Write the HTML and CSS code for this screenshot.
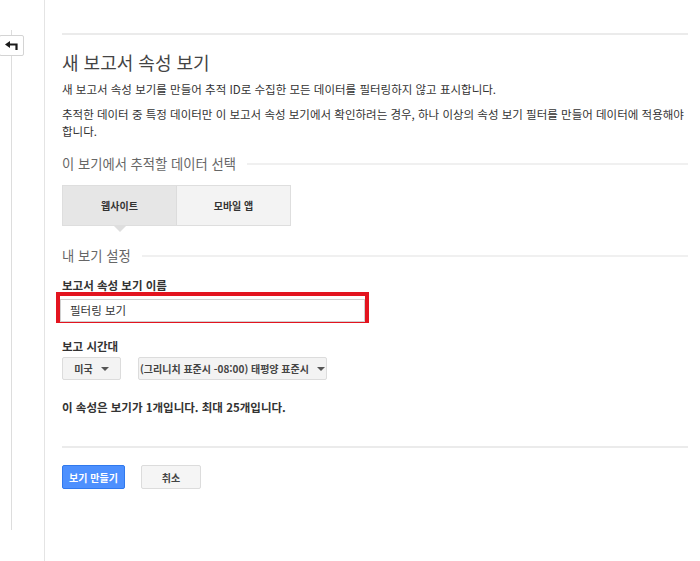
FILE: index.html
```html
<!DOCTYPE html>
<html lang="ko">
<head>
  <meta charset="UTF-8">
  <title>새 보고서 속성 보기</title>
  <link rel="stylesheet" href="styles.css">
</head>
<body>
  <div class="page">
    <div class="rail">
      <div class="track"></div>
      <button class="back-btn" title="뒤로">
        <svg width="13" height="10" viewBox="0 0 13 10">
          <path d="M4 3.5 H11.5 V9" fill="none" stroke="#1a1a1a" stroke-width="2.2"/>
          <path d="M0 3.5 L5 0 V7 Z" fill="#1a1a1a"/>
        </svg>
      </button>
    </div>

    <div class="main">
      <hr class="divider">

      <h1 class="title">새 보고서 속성 보기</h1>
      <p class="desc">새 보고서 속성 보기를 만들어 추적 ID로 수집한 모든 데이터를 필터링하지 않고 표시합니다.</p>
      <p class="desc desc-2">추적한 데이터 중 특정 데이터만 이 보고서 속성 보기에서 확인하려는 경우, 하나 이상의 속성 보기 필터를 만들어 데이터에 적용해야 합니다.</p>

      <div class="section-title">이 보기에서 추적할 데이터 선택</div>

      <div class="tabs">
        <div class="tab active">웹사이트</div>
        <div class="tab">모바일 앱</div>
      </div>

      <div class="section-title section-2">내 보기 설정</div>

      <label class="field-label" for="viewName">보고서 속성 보기 이름</label>
      <div class="highlight">
        <input id="viewName" class="text-input" type="text" value="필터링 보기">
      </div>

      <div class="field-label tz-label">보고 시간대</div>
      <div class="selects">
        <div class="select sel-country">미국 <span class="caret"></span></div>
        <div class="select sel-zone">(그리니치 표준시 -08:00) 태평양 표준시 <span class="caret"></span></div>
      </div>

      <div class="notice">이 속성은 보기가 1개입니다. 최대 25개입니다.</div>

      <hr class="divider bottom">

      <div class="actions">
        <button class="btn btn-primary">보기 만들기</button>
        <button class="btn btn-secondary">취소</button>
      </div>
    </div>
  </div>
</body>
</html>
```

FILE: styles.css
```css
:root {
  --text: #333333;
  --text-light: #666666;
  --line: #ebebeb;
  --border: #d9d9d9;
  --blue: #4d90fe;
  --red: #e3141f;
}

* {
  margin: 0;
  padding: 0;
  box-sizing: border-box;
}

body {
  background: #ffffff;
  font-family: "Noto Sans CJK KR", "Noto Sans", sans-serif;
  color: var(--text);
}

.page {
  display: flex;
  height: 561px;
  overflow: hidden;
}

.rail {
  position: relative;
  width: 45px;
  flex-shrink: 0;
  border-right: 1px solid #e4e4e4;
}
.track {
  margin: 30px 0 0 11px;
  height: 500px;
  border-left: 1px solid #dddddd;
}
.back-btn {
  position: absolute;
  left: -1px;
  top: 35px;
  width: 25px;
  height: 21px;
  background: #ffffff;
  border: 1px solid #d4d4d4;
  border-radius: 2px;
  display: flex;
  align-items: center;
  justify-content: center;
}

.main {
  flex: 1;
  padding: 33px 12px 0 17px;
}

.divider {
  border: none;
  border-top: 2px solid var(--line);
}

.title {
  margin-top: 15px;
  font-size: 18px;
  line-height: 24px;
  font-weight: 400;
  color: #444444;
}

.desc {
  margin-top: 7px;
  font-size: 11.5px;
  line-height: 17px;
  word-break: keep-all;
}
.desc-2 {
  margin-top: 8px;
}

.section-title {
  display: flex;
  align-items: center;
  gap: 11px;
  margin-top: 14px;
  font-size: 13.3px;
  line-height: 20px;
  color: var(--text-light);
}
.section-title::after {
  content: "";
  flex: 1;
  border-top: 2px solid #f0f0f0;
}
.section-2 {
  margin-top: 20px;
}

.tabs {
  display: flex;
  width: 229px;
  margin-top: 11px;
  border: 1px solid #dedede;
}
.tab {
  position: relative;
  flex: 1;
  height: 39px;
  display: flex;
  align-items: center;
  justify-content: center;
  font-size: 10px;
  font-weight: 700;
  color: #333333;
  background: #f3f3f3;
}
.tab + .tab {
  border-left: 1px solid #dcdcdc;
}
.tab.active {
  background: #e6e6e6;
}
.tab.active::after {
  content: "";
  position: absolute;
  left: 50%;
  top: 100%;
  margin: 1px 0 0 -6px;
  border: 6px solid transparent;
  border-top-color: #dedede;
  border-bottom: none;
}

.field-label {
  display: block;
  margin-top: 12px;
  font-size: 11.5px;
  line-height: 14px;
  font-weight: 700;
  color: #333333;
}

.highlight {
  margin-left: -6px;
  width: 313px;
  height: 31px;
  border: 4px solid var(--red);
}
.text-input {
  width: 100%;
  height: 100%;
  border: 1px solid #d0d0d0;
  padding: 0 9px;
  font-family: inherit;
  font-size: 11.5px;
  color: #333333;
  outline: none;
}

.tz-label {
  margin-top: 16px;
}

.selects {
  display: flex;
  gap: 17px;
  margin-top: 4px;
}
.select {
  height: 23px;
  display: flex;
  align-items: center;
  justify-content: center;
  gap: 6px;
  background: #f3f3f3;
  border: 1px solid #dcdcdc;
  border-radius: 2px;
  font-size: 10px;
  font-weight: 700;
  color: #444444;
}
.sel-country {
  width: 59px;
}
.sel-zone {
  width: 189px;
}
.caret {
  border: 4px solid transparent;
  border-top-color: #555555;
  border-bottom: none;
  margin-left: 2px;
}

.notice {
  margin-top: 19px;
  font-size: 11.5px;
  line-height: 16px;
  font-weight: 700;
  color: #333333;
}

.bottom {
  margin-top: 31px;
}

.actions {
  display: flex;
  gap: 16px;
  margin-top: 17px;
}
.btn {
  height: 24px;
  border-radius: 2px;
  font-family: inherit;
  font-size: 10px;
  font-weight: 700;
  cursor: pointer;
}
.btn-primary {
  width: 63px;
  background: var(--blue);
  border: 1px solid #3079ed;
  color: #ffffff;
}
.btn-secondary {
  width: 60px;
  background: #f5f5f5;
  border: 1px solid #dcdcdc;
  color: #444444;
}
```
